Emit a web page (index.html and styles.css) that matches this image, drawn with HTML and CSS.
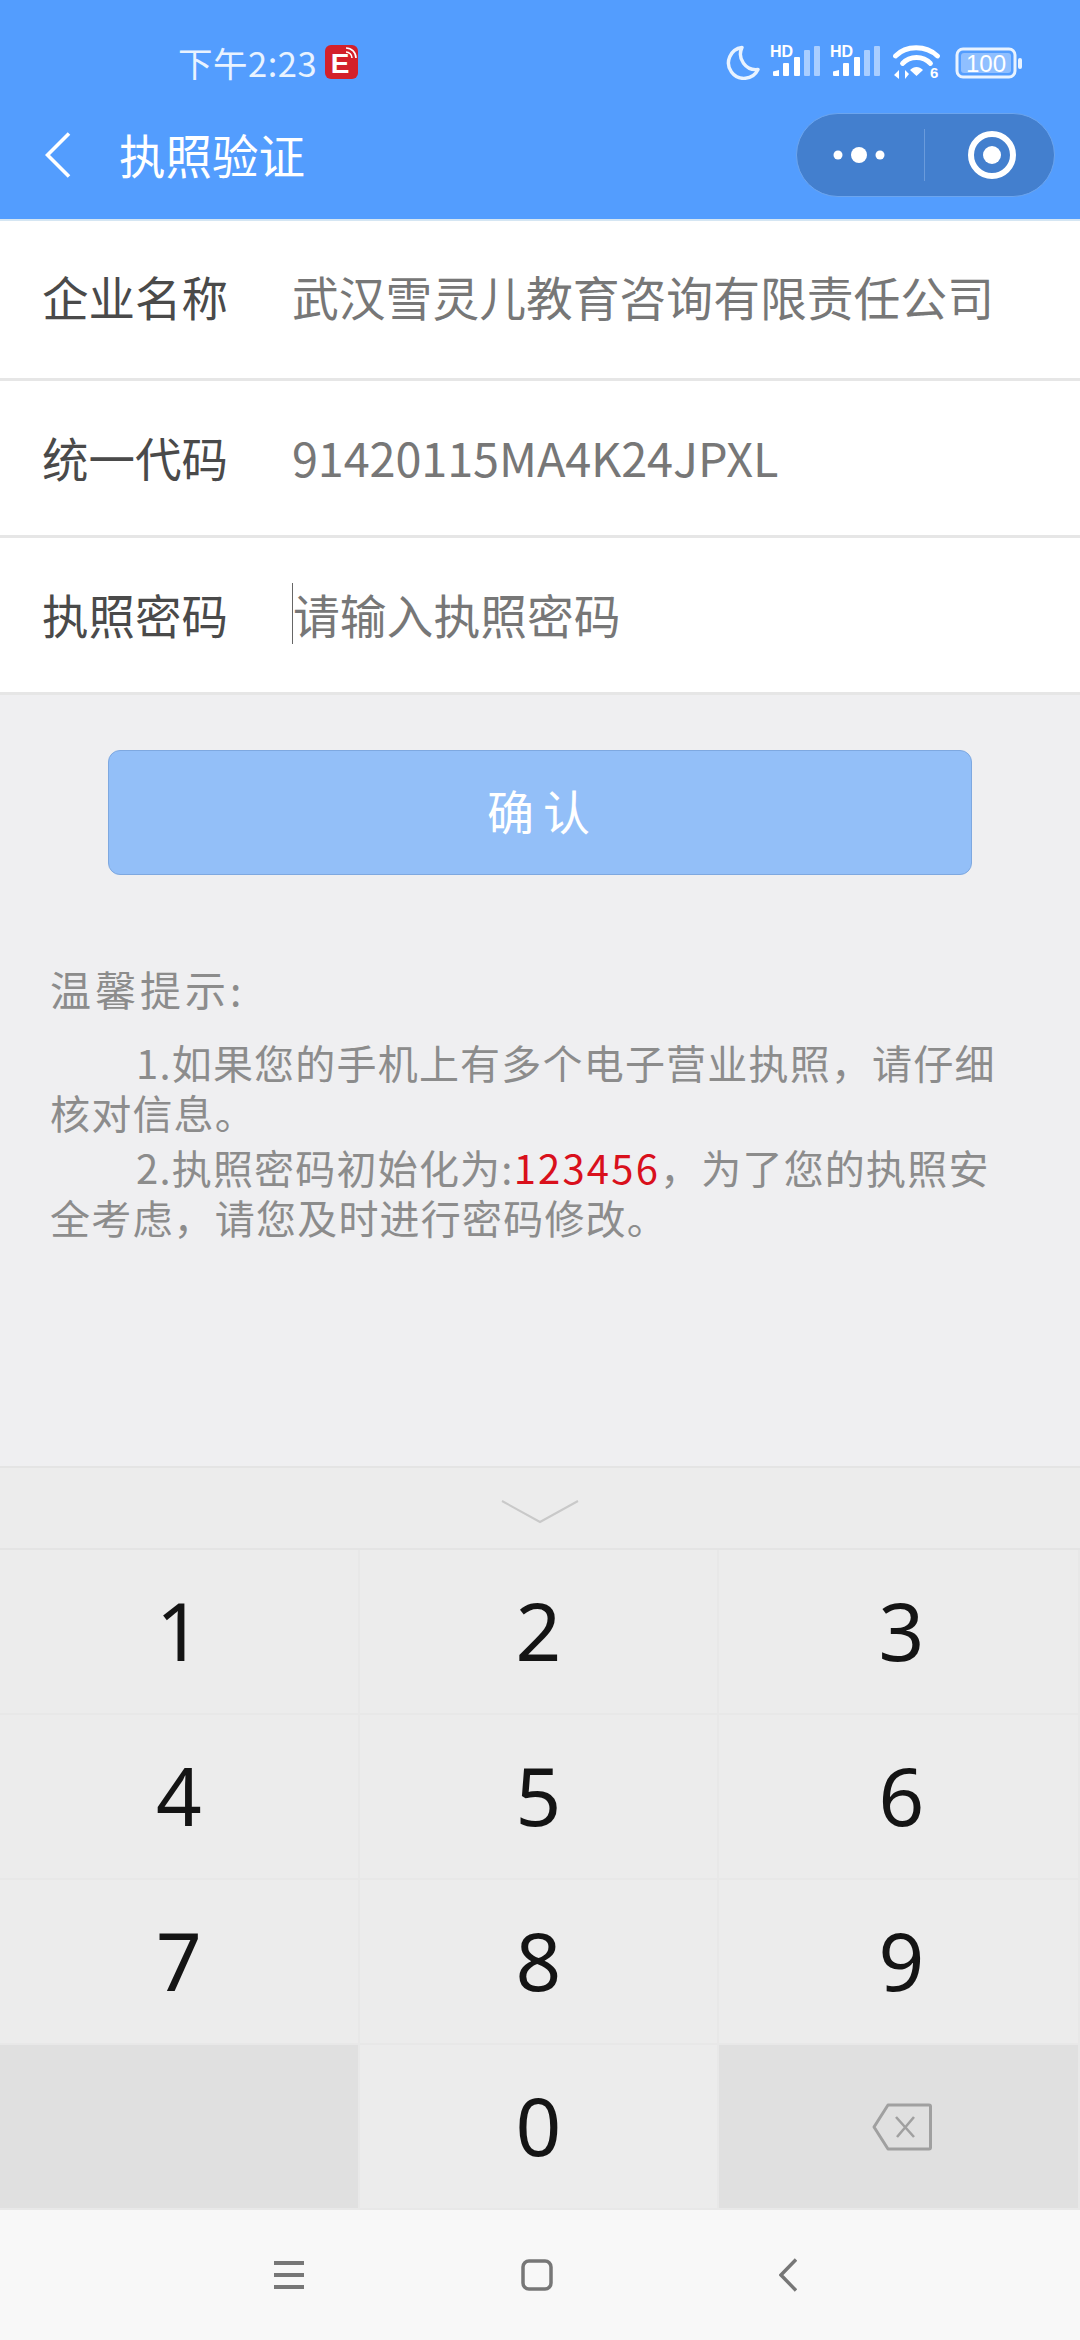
FILE: index.html
```html
<!DOCTYPE html>
<html lang="zh-CN">
<head>
    <meta charset="UTF-8">
    <meta name="viewport" content="width=device-width, initial-scale=1.0">
    <title>执照验证</title>
    <link rel="stylesheet" href="styles.css">
</head>
<body>
    <div class="app">
        <header class="top">
            <div class="status">
                <span class="time">下午2:23</span>
                <svg class="e-icon" width="33" height="34" viewBox="0 0 33 34">
                    <rect width="33" height="34" rx="6" fill="#d3202a"/>
                    <text x="15" y="28" class="e-letter">E</text>
                    <path d="M21 7a6 6 0 0 1 6 6M21 3a10 10 0 0 1 10 10" fill="none" stroke="#fff" stroke-width="1.6"/>
                </svg>
                <div class="status-right">
                    <svg width="36" height="36" viewBox="0 0 36 36">
                        <path d="M17 3.500A15.500 15.500 0 1 0 33 25.500 15.500 15.500 0 0 1 17 3.500Z" fill="none" stroke="#e9f3ff" stroke-width="3.400" stroke-linejoin="round"/>
                    </svg>
                    <svg class="signal" width="51" height="34" viewBox="0 0 51 34">
                        <text x="0" y="13" class="hd">HD</text>
                        <path d="M3 27.500 9 26v6H4a1 1 0 0 1-1-1Z" fill="#fff"/>
                        <rect x="13" y="19" width="6" height="13" rx="1" fill="#fff"/>
                        <rect x="24" y="13" width="6" height="19" rx="1" fill="#fff"/>
                        <rect x="34" y="6" width="6" height="26" rx="1" fill="#a9ceff"/>
                        <rect x="44" y="2" width="6" height="30" rx="1" fill="#a9ceff"/>
                    </svg>
                    <svg class="signal" width="51" height="34" viewBox="0 0 51 34">
                        <text x="0" y="13" class="hd">HD</text>
                        <path d="M3 27.500 9 26v6H4a1 1 0 0 1-1-1Z" fill="#fff"/>
                        <rect x="13" y="19" width="6" height="13" rx="1" fill="#fff"/>
                        <rect x="24" y="13" width="6" height="19" rx="1" fill="#fff"/>
                        <rect x="34" y="6" width="6" height="26" rx="1" fill="#a9ceff"/>
                        <rect x="44" y="2" width="6" height="30" rx="1" fill="#a9ceff"/>
                    </svg>
                    <svg class="wifi" width="47" height="36" viewBox="0 0 47 36">
                        <path d="M2.500 12C13 1 33 1 44.500 12" fill="none" stroke="#fff" stroke-width="4.800" stroke-linecap="round"/>
                        <path d="M9.500 19.500C17 11.500 30 11.500 37.500 19.500" fill="none" stroke="#fff" stroke-width="4.800" stroke-linecap="round"/>
                        <path d="M17 26c4-4 9-4 13 0l-6.500 6Z" fill="#fff"/>
                        <path d="M6 26v9L1 31ZM12 35v-9l4 4Z" fill="#fff"/>
                        <text x="37" y="34" class="wifi-six">6</text>
                    </svg>
                    <svg class="battery" width="68" height="32" viewBox="0 0 68 32">
                        <rect x="2" y="2" width="58" height="28" rx="6" fill="none" stroke="#e9f3ff" stroke-width="3"/>
                        <rect x="6" y="6" width="50" height="20" rx="3" fill="#8fbfff"/>
                        <rect x="63" y="11" width="4" height="11" rx="2" fill="#e9f3ff"/>
                        <text x="31" y="25" class="battery-text">100</text>
                    </svg>
                </div>
            </div>
            <div class="navbar">
                <svg class="back" width="26" height="46" viewBox="0 0 26 46">
                    <path d="M24 1.500 2.500 23 24 44.500" fill="none" stroke="#fff" stroke-width="3.600"/>
                </svg>
                <h1 class="page-title">执照验证</h1>
                <div class="capsule">
                    <div class="capsule-side side-dots">
                        <svg width="60" height="20" viewBox="0 0 60 20">
                            <circle cx="9" cy="10" r="4.500" fill="#fff"/>
                            <circle cx="30" cy="10" r="8" fill="#fff"/>
                            <circle cx="51" cy="10" r="4.500" fill="#fff"/>
                        </svg>
                    </div>
                    <div class="capsule-line"></div>
                    <div class="capsule-side side-target">
                        <svg width="48" height="48" viewBox="0 0 48 48">
                            <circle cx="24" cy="24" r="21" fill="none" stroke="#fff" stroke-width="6"/>
                            <circle cx="24" cy="24" r="9" fill="#fff"/>
                        </svg>
                    </div>
                </div>
            </div>
        </header>

        <section class="form">
            <div class="row row-a">
                <span class="label">企业名称</span>
                <span class="value">武汉雪灵儿教育咨询有限责任公司</span>
            </div>
            <div class="row row-b">
                <span class="label">统一代码</span>
                <span class="value code">91420115MA4K24JPXL</span>
            </div>
            <div class="row row-c">
                <span class="label">执照密码</span>
                <span class="value placeholder">请输入执照密码</span>
            </div>
        </section>

        <main class="content">
            <button class="confirm">确认</button>
            <div class="tips">
                <p class="tips-title">温馨提示:</p>
                <p class="tip">1.如果您的手机上有多个电子营业执照，请仔细核对信息。</p>
                <p class="tip">2.执照密码初始化为:<span class="red">123456</span>，为了您的执照安全考虑，请您及时进行密码修改。</p>
            </div>
        </main>

        <section class="keyboard">
            <div class="kb-handle">
                <svg width="78" height="24" viewBox="0 0 78 24">
                    <path d="M1 1 39 22 77 1" fill="none" stroke="#c9c9c9" stroke-width="2"/>
                </svg>
            </div>
            <div class="keys">
                <div class="key">1</div>
                <div class="key">2</div>
                <div class="key">3</div>
                <div class="key">4</div>
                <div class="key">5</div>
                <div class="key">6</div>
                <div class="key">7</div>
                <div class="key">8</div>
                <div class="key">9</div>
                <div class="key key-dark"></div>
                <div class="key">0</div>
                <div class="key key-dark">
                    <svg width="60" height="48" viewBox="0 0 60 48">
                        <path d="M16 2H57a1.500 1.500 0 0 1 1.500 1.500v41a1.500 1.500 0 0 1-1.500 1.500H16L2 24Z" fill="none" stroke="#a0a0a0" stroke-width="3" stroke-linejoin="round"/>
                        <path d="M24 14 42 34M42 14 25 34" fill="none" stroke="#a0a0a0" stroke-width="2.600"/>
                    </svg>
                </div>
            </div>
        </section>

        <nav class="sysnav">
            <svg width="30" height="32" viewBox="0 0 30 32">
                <path d="M0 4H30M0 16H30M0 28H30" stroke="#777" stroke-width="4"/>
            </svg>
            <svg width="32" height="32" viewBox="0 0 32 32">
                <rect x="2" y="2" width="28" height="28" rx="6" fill="none" stroke="#777" stroke-width="3.500"/>
            </svg>
            <svg class="nav-back" width="18" height="34" viewBox="0 0 18 34">
                <path d="M17 1.500 2 17 17 32.500" fill="none" stroke="#777" stroke-width="3.400"/>
            </svg>
        </nav>
    </div>
</body>
</html>
```

FILE: styles.css
```css
* {
    box-sizing: border-box;
}
body {
    margin: 0;
    font-family: "Noto Sans CJK SC", "Noto Sans", sans-serif;
    background-color: #efeff1;
}
.app {
    width: 1080px;
    height: 2340px;
    display: flex;
    flex-direction: column;
    overflow: hidden;
}

/* top blue area */
.top {
    height: 221px;
    background-color: #539dfe;
    border-bottom: 2px solid #d5e6f3;
    color: #fff;
    flex-shrink: 0;
}
.status {
    height: 113px;
    display: flex;
    align-items: flex-start;
    padding: 44px 57px 0 178px;
}
.time {
    font-size: 34.5px;
    line-height: 36px;
    color: #e9f3ff;
    letter-spacing: 0.5px;
}
.e-icon {
    margin: 1px 0 0 8px;
}
.e-letter {
    font-family: "Liberation Sans", sans-serif;
    font-size: 28px;
    font-weight: 700;
    fill: #fff;
    text-anchor: middle;
}
.status-right {
    margin-left: auto;
    display: flex;
    align-items: flex-start;
    gap: 9px;
}
.hd {
    font-family: "Liberation Sans", sans-serif;
    font-size: 16px;
    font-weight: 700;
    fill: #fff;
}
.wifi {
    margin-left: 3px;
    margin-right: 6px;
}
.wifi-six {
    font-family: "Liberation Sans", sans-serif;
    font-size: 15px;
    font-weight: 700;
    fill: #fff;
}
.battery {
    margin-top: 3px;
}
.battery-text {
    font-family: "Liberation Sans", sans-serif;
    font-size: 24px;
    fill: #fff;
    text-anchor: middle;
}
.navbar {
    height: 84px;
    display: flex;
    align-items: center;
    padding: 0 25px 0 45px;
}
.page-title {
    margin: 0 0 3px 48px;
    font-size: 46.5px;
    font-weight: 400;
    line-height: 60px;
}
.capsule {
    margin-left: auto;
    width: 259px;
    height: 84px;
    border-radius: 42px;
    background-color: #437fce;
    border: 1px solid #6ca5ee;
    display: flex;
    align-items: center;
}
.capsule-side {
    flex: 1;
    display: flex;
    justify-content: center;
    align-items: center;
}
.side-dots {
    padding-right: 3px;
}
.side-target {
    padding-left: 6px;
}
.capsule-line {
    width: 1px;
    height: 52px;
    background-color: #6a9bdc;
}

/* form rows */
.form {
    background-color: #fff;
    flex-shrink: 0;
}
.row {
    display: flex;
    align-items: center;
    padding-left: 42px;
    border-bottom: 3px solid #e6e6e6;
}
.row-a {
    height: 160px;
    padding-bottom: 8px;
}
.row-b {
    height: 157px;
    padding-bottom: 3px;
}
.row-c {
    height: 157px;
    padding-bottom: 3px;
}
.label {
    width: 250px;
    font-size: 46.5px;
    color: #4a4a4a;
    flex-shrink: 0;
}
.value {
    font-size: 46.8px;
    color: #777;
    white-space: nowrap;
}
.code {
    letter-spacing: -0.1px;
}
.placeholder {
    border-left: 1px solid #666;
    line-height: 61px;
}

/* button and tips */
.content {
    flex: 1;
    padding-top: 55px;
}
.confirm {
    display: block;
    width: 864px;
    height: 125px;
    margin: 0 auto;
    padding: 0 0 6px 6px;
    background-color: #93bff8;
    border: 1px solid #7ea8e0;
    border-radius: 12px;
    color: #fff;
    font-family: inherit;
    font-size: 47px;
    letter-spacing: 9px;
}
.tips {
    padding: 85px 60px 0 50px;
    color: #8c8c8c;
    font-size: 40px;
    letter-spacing: 1.2px;
}
.tips p {
    margin: 0;
}
.tips-title {
    font-size: 41px;
    letter-spacing: 4px;
    line-height: 56px;
    margin-bottom: 21px !important;
}
.tip {
    text-indent: 86px;
    line-height: 50px;
    margin-bottom: 5px !important;
}
.red {
    color: #d9101c;
    letter-spacing: 2.2px;
}

/* keyboard */
.keyboard {
    flex-shrink: 0;
    background-color: #ececec;
    border-top: 2px solid #e4e4e4;
}
.kb-handle {
    height: 82px;
    display: flex;
    justify-content: center;
    padding-top: 32px;
    border-bottom: 2px solid #e4e4e4;
}
.keys {
    display: grid;
    grid-template-columns: 360px 359px 361px;
    grid-auto-rows: 165px;
}
.key {
    display: flex;
    justify-content: center;
    align-items: center;
    padding-bottom: 4px;
    font-family: "Noto Sans", sans-serif;
    font-size: 80px;
    color: #141414;
    border-right: 2px solid #e8e8e8;
    border-bottom: 2px solid #e8e8e8;
}
.key:nth-child(3n) {
    padding-left: 6px;
}
.key-dark {
    background-color: #e0e0e0;
    padding-bottom: 0;
}
.sysnav {
    flex-shrink: 0;
    height: 130px;
    background-color: #f8f8f8;
    display: flex;
    align-items: center;
    gap: 217px;
    padding-left: 274px;
}
.nav-back {
    margin-left: 9px;
}
```
